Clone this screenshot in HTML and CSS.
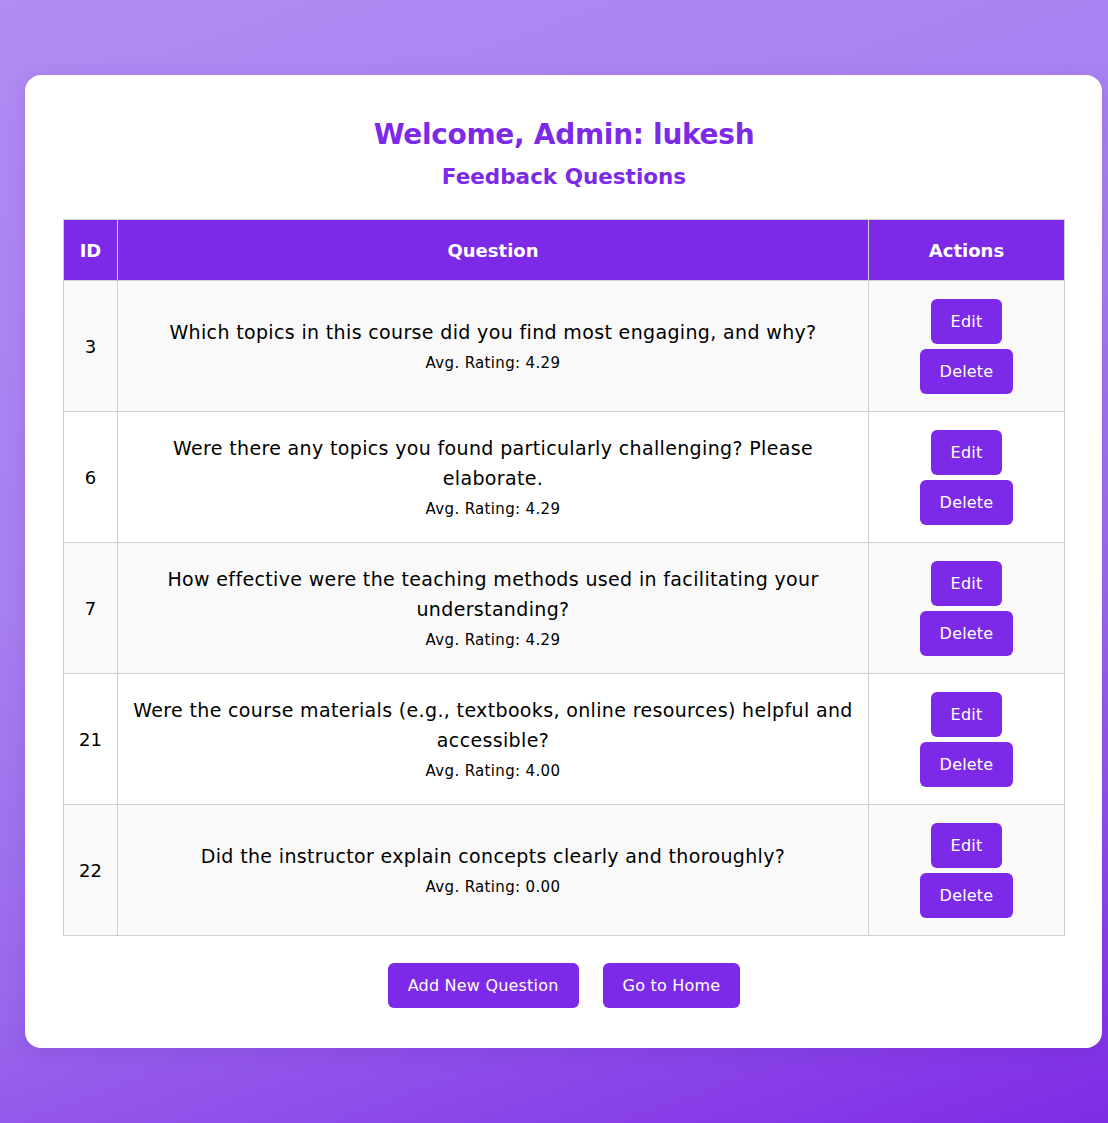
FILE: index.html
```html
<!DOCTYPE html>
<html lang="en">
<head>
<meta charset="UTF-8">
<title>Feedback Questions</title>
<link rel="stylesheet" href="styles.css">
</head>
<body>
<div class="card">
  <h1 class="title">Welcome, Admin: lukesh</h1>
  <h2 class="subtitle">Feedback Questions</h2>
  <table class="qtable">
    <thead>
      <tr>
        <th class="col-id">ID</th>
        <th class="col-q">Question</th>
        <th class="col-act">Actions</th>
      </tr>
    </thead>
    <tbody>
      <tr>
        <td class="cell-id">3</td>
        <td class="cell-q"><div class="qtext">Which topics in this course did you find most engaging, and why?</div><div class="rating">Avg. Rating: 4.29</div></td>
        <td class="cell-act"><div class="actions"><button class="btn">Edit</button><button class="btn">Delete</button></div></td>
      </tr>
      <tr>
        <td class="cell-id">6</td>
        <td class="cell-q"><div class="qtext">Were there any topics you found particularly challenging? Please elaborate.</div><div class="rating">Avg. Rating: 4.29</div></td>
        <td class="cell-act"><div class="actions"><button class="btn">Edit</button><button class="btn">Delete</button></div></td>
      </tr>
      <tr>
        <td class="cell-id">7</td>
        <td class="cell-q"><div class="qtext">How effective were the teaching methods used in facilitating your understanding?</div><div class="rating">Avg. Rating: 4.29</div></td>
        <td class="cell-act"><div class="actions"><button class="btn">Edit</button><button class="btn">Delete</button></div></td>
      </tr>
      <tr>
        <td class="cell-id">21</td>
        <td class="cell-q"><div class="qtext">Were the course materials (e.g., textbooks, online resources) helpful and accessible?</div><div class="rating">Avg. Rating: 4.00</div></td>
        <td class="cell-act"><div class="actions"><button class="btn">Edit</button><button class="btn">Delete</button></div></td>
      </tr>
      <tr>
        <td class="cell-id">22</td>
        <td class="cell-q"><div class="qtext">Did the instructor explain concepts clearly and thoroughly?</div><div class="rating">Avg. Rating: 0.00</div></td>
        <td class="cell-act"><div class="actions"><button class="btn">Edit</button><button class="btn">Delete</button></div></td>
      </tr>
    </tbody>
  </table>
  <div class="footer-actions">
    <button class="btn">Add New Question</button>
    <button class="btn">Go to Home</button>
  </div>
</div>
</body>
</html>
```
FILE: styles.css
```css
* { box-sizing: border-box; }
html, body { height: 100%; }
body {
  margin: 0;
  padding: 75px 6px 75px 25px;
  font-family: "DejaVu Sans", "Open Sans", sans-serif;
  color: #000;
  background: linear-gradient(160deg, #b08cf3 0%, #a67ff0 40%, #9a68ec 65%, #7f2be6 100%);
}
.card {
  background: #fff;
  border-radius: 16px;
  padding: 38px 37px 40px 38px;
  box-shadow: 0 4px 20px rgba(60, 20, 120, 0.12);
}
.title {
  margin: 0 0 4px;
  text-align: center;
  color: #7d2ae8;
  font-size: 28px;
  letter-spacing: -0.3px;
  line-height: 44px;
  font-weight: 700;
}
.subtitle {
  margin: 0 0 26px;
  text-align: center;
  color: #7d2ae8;
  font-size: 21.5px;
  line-height: 32px;
  font-weight: 700;
}
.qtable {
  width: 100%;
  border-collapse: collapse;
  table-layout: fixed;
}
.qtable th, .qtable td {
  border: 1px solid #cfcfcf;
  text-align: center;
  vertical-align: middle;
}
.qtable th {
  background: #7d2ae8;
  color: #fff;
  font-size: 18px;
  font-weight: 700;
  height: 61px;
  padding: 0 12px;
}
.col-id { width: 54px; }
.col-act { width: 196px; }
.qtable tbody tr { height: 131px; }
.qtable tbody tr:nth-child(odd) td { background: #f9f9f9; }
.qtable tbody tr:nth-child(even) td { background: #fff; }
.qtable td { padding: 15px 15px; }
.qtable td.cell-q { padding: 15px 12px; }
.cell-id { font-size: 18px; }
.qtext { font-size: 19px; letter-spacing: 0.35px; line-height: 30px; }
.rating { font-size: 15px; letter-spacing: 0.35px; line-height: 24px; margin-top: 4px; }
.actions {
  display: flex;
  flex-direction: column;
  align-items: center;
  gap: 5px;
}
.btn {
  font-family: inherit;
  background: #7d2ae8;
  color: #fff;
  border: none;
  border-radius: 6px;
  font-size: 16px;
  letter-spacing: 0.2px;
  line-height: 25px;
  padding: 10px 20px;
  cursor: pointer;
}
.footer-actions {
  display: flex;
  justify-content: center;
  gap: 24px;
  margin-top: 27px;
}
```
